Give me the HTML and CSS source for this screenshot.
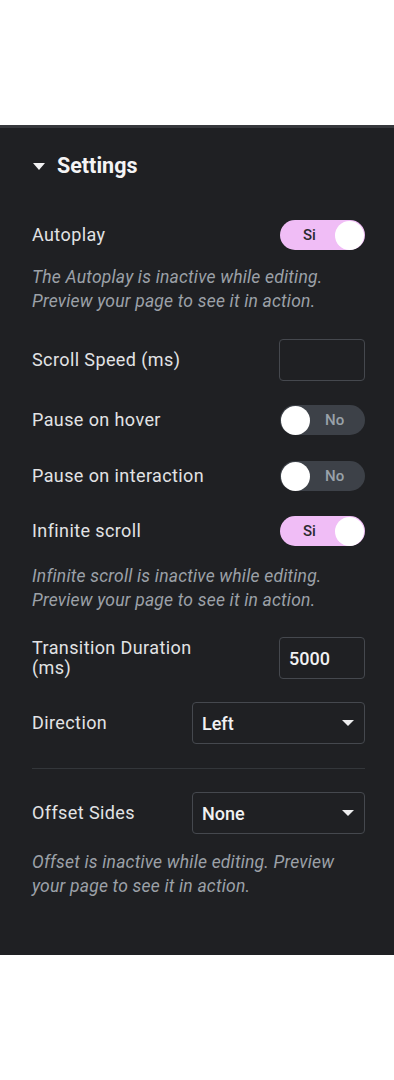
FILE: index.html
```html
<!DOCTYPE html>
<html>
<head>
<meta charset="utf-8">
<link rel="stylesheet" href="styles.css">
</head>
<body>
<div class="top-space"></div>
<section class="panel">
  <div class="section-head">
    <span class="caret"></span>
    <span class="section-title">Settings</span>
  </div>

  <div class="row r-autoplay">
    <span class="label">Autoplay</span>
    <span class="switch on"><span class="switch-text">Si</span><span class="knob"></span></span>
  </div>
  <p class="note n-autoplay">The Autoplay is inactive while editing.<br>Preview your page to see it in action.</p>

  <div class="row r-speed">
    <span class="label">Scroll Speed (ms)</span>
    <span class="input"></span>
  </div>

  <div class="row r-hover">
    <span class="label">Pause on hover</span>
    <span class="switch off"><span class="knob"></span><span class="switch-text">No</span></span>
  </div>

  <div class="row r-inter">
    <span class="label">Pause on interaction</span>
    <span class="switch off"><span class="knob"></span><span class="switch-text">No</span></span>
  </div>

  <div class="row r-infinite">
    <span class="label">Infinite scroll</span>
    <span class="switch on"><span class="switch-text">Si</span><span class="knob"></span></span>
  </div>
  <p class="note n-infinite">Infinite scroll is inactive while editing.<br>Preview your page to see it in action.</p>

  <div class="row r-trans">
    <span class="label two-line">Transition Duration<br>(ms)</span>
    <span class="input"><span class="input-value">5000</span></span>
  </div>

  <div class="row r-dir">
    <span class="label">Direction</span>
    <span class="select"><span class="select-value">Left</span><span class="arrow"></span></span>
  </div>

  <div class="divider"></div>

  <div class="row r-offset">
    <span class="label">Offset Sides</span>
    <span class="select"><span class="select-value">None</span><span class="arrow"></span></span>
  </div>
  <p class="note n-offset">Offset is inactive while editing. Preview<br>your page to see it in action.</p>
</section>
</body>
</html>
```

FILE: styles.css
```css
html, body {
  margin: 0;
  padding: 0;
  background: #ffffff;
}
body {
  font-family: Roboto, "Liberation Sans", sans-serif;
  width: 394px;
}
.top-space {
  height: 125px;
}
.panel {
  background: #1f2023;
  border-top: 3px solid #36383c;
  padding: 26px 29px 57px 32px;
  display: flex;
  flex-direction: column;
}
.section-head {
  display: flex;
  align-items: center;
  height: 24px;
}
.caret {
  width: 0;
  height: 0;
  border-left: 6px solid transparent;
  border-right: 6px solid transparent;
  border-top: 7px solid #f2f2f3;
  margin: 0 12px 0 1px;
}
.section-title {
  color: #f4f4f5;
  font-weight: 700;
  font-size: 21.5px;
  line-height: 24px;
}
.row {
  display: flex;
  align-items: center;
  justify-content: space-between;
}
.label {
  color: #e2e3e5;
  font-size: 18px;
  letter-spacing: 0.4px;
  line-height: 22px;
}
.label.two-line {
  line-height: 20px;
}
.r-autoplay { margin-top: 42px; height: 30px; }
.n-autoplay { margin-top: 15px; }
.r-speed { margin-top: 26px; height: 42px; }
.r-hover { margin-top: 24px; height: 30px; }
.r-inter { margin-top: 26px; height: 30px; }
.r-infinite { margin-top: 25px; height: 30px; }
.n-infinite { margin-top: 18px; }
.r-trans { margin-top: 25px; height: 42px; }
.r-dir { margin-top: 23px; height: 42px; }
.r-offset { margin-top: 23px; height: 42px; }
.n-offset { margin-top: 16px; }

.note {
  margin-bottom: 0;
  margin-right: 0;
  margin-left: 0;
  color: #9ca1a8;
  font-style: italic;
  font-size: 17.5px;
  letter-spacing: 0.2px;
  line-height: 24px;
  white-space: nowrap;
}
.switch {
  width: 85px;
  height: 30px;
  border-radius: 15px;
  display: flex;
  align-items: center;
  box-sizing: border-box;
}
.switch.on {
  background: #f0bdf6;
  justify-content: space-between;
  padding: 0 1px 0 0;
}
.switch.off {
  background: #3d4148;
  padding: 0 0 0 1px;
}
.knob {
  width: 29px;
  height: 29px;
  border-radius: 50%;
  background: #ffffff;
}
.switch-text {
  font-size: 15px;
  font-weight: 500;
}
.switch.on .switch-text {
  color: #2b2b30;
  margin-left: 23px;
}
.switch.off .switch-text {
  color: #9aa1a9;
  margin-left: 15px;
}
.input {
  width: 86px;
  height: 42px;
  box-sizing: border-box;
  border: 1px solid #45484e;
  border-radius: 4px;
  display: flex;
  align-items: center;
  padding-left: 9px;
}
.input-value, .select-value {
  color: #f1f1f2;
  font-size: 18px;
  font-weight: 500;
}
.select {
  width: 173px;
  height: 42px;
  box-sizing: border-box;
  border: 1px solid #45484e;
  border-radius: 4px;
  display: flex;
  align-items: center;
  justify-content: space-between;
  padding: 0 10px 0 9px;
}
.arrow {
  width: 0;
  height: 0;
  border-left: 6px solid transparent;
  border-right: 6px solid transparent;
  border-top: 6px solid #eeeeef;
}
.divider {
  margin-top: 24px;
  height: 1px;
  background: #33363a;
}
```
